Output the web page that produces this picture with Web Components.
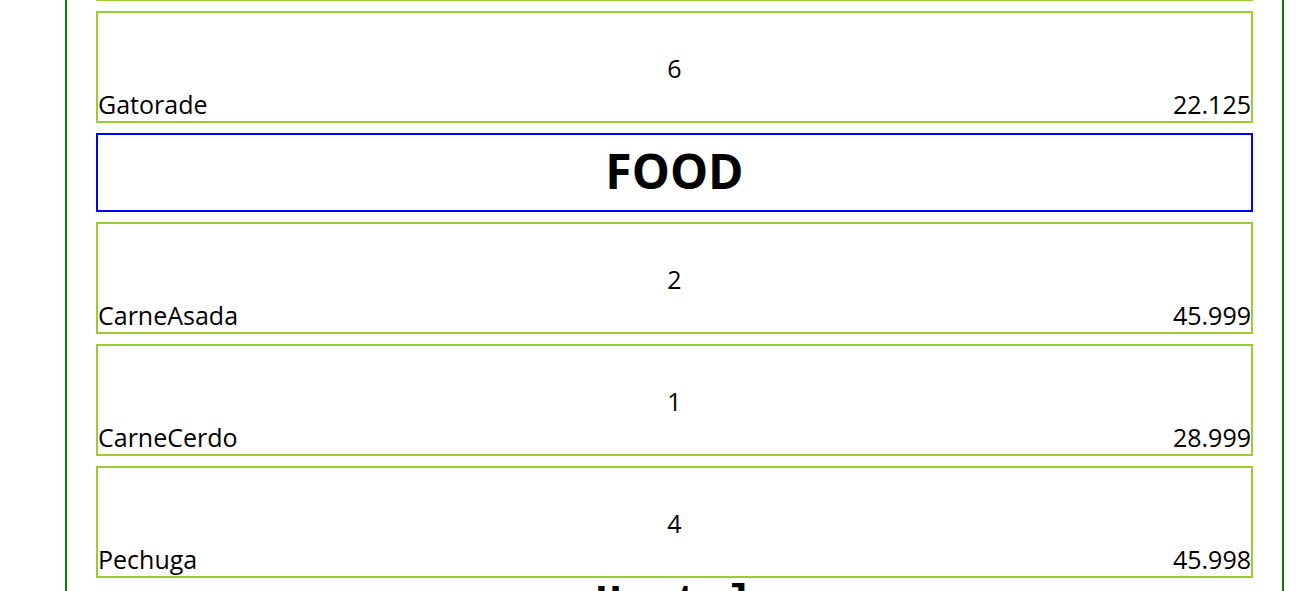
<!DOCTYPE html>
<html lang="es">
<head>
<meta charset="utf-8">
<title>Menu</title>
<style>
html, body { margin: 0; height: 100%; overflow: hidden; }
body { background: #fff; color: #000; font-family: "Open Sans", "Noto Sans", sans-serif; }
</style>
</head>
<body>
<menu-board>
  <menu-edge></menu-edge>
  <menu-item name="Gatorade" quantity="6" price="22.125"></menu-item>
  <menu-heading>FOOD</menu-heading>
  <menu-item name="CarneAsada" quantity="2" price="45.999"></menu-item>
  <menu-item name="CarneCerdo" quantity="1" price="28.999"></menu-item>
  <menu-item name="Pechuga" quantity="4" price="45.998"></menu-item>
  <brand-title slot="footer">Hostal</brand-title>
</menu-board>
<script>
class MenuBoard extends HTMLElement {
  constructor() {
    super();
    this.attachShadow({ mode: "open" }).innerHTML = `
      <style>
        :host { display: block; box-sizing: border-box; min-height: 100vh; margin: 0 32px 0 65px; padding: 0 29px; border: solid green; border-width: 0 2px; }
        main { display: flex; flex-direction: column; gap: 10px; }
      </style>
      <main><slot></slot></main>
      <footer><slot name="footer"></slot></footer>`;
  }
}
class MenuEdge extends HTMLElement {
  constructor() {
    super();
    this.attachShadow({ mode: "open" }).innerHTML = `
      <style>:host { display: block; border-bottom: 1px solid yellowgreen; }</style>`;
  }
}
class MenuHeading extends HTMLElement {
  constructor() {
    super();
    this.attachShadow({ mode: "open" }).innerHTML = `
      <style>
        :host { display: block; border: 2px solid blue; padding-bottom: 4px; }
        h1 { margin: 0; font-size: 48px; line-height: 71px; font-weight: 700; text-align: center; }
      </style>
      <h1><slot></slot></h1>`;
  }
}
class MenuItem extends HTMLElement {
  constructor() {
    super();
    this.attachShadow({ mode: "open" }).innerHTML = `
      <style>
        :host { display: block; border: 2px solid yellowgreen; padding-top: 36px; font-size: 25px; line-height: 38px; }
        p { margin: 0; text-align: center; }
        div { display: flex; justify-content: space-between; line-height: 34px; }
      </style>
      <p></p>
      <div><span class="name"></span><span class="price"></span></div>`;
  }
  connectedCallback() {
    this.shadowRoot.querySelector("p").textContent = this.getAttribute("quantity");
    this.shadowRoot.querySelector(".name").textContent = this.getAttribute("name");
    this.shadowRoot.querySelector(".price").textContent = this.getAttribute("price");
  }
}
class BrandTitle extends HTMLElement {
  constructor() {
    super();
    this.attachShadow({ mode: "open" }).innerHTML = `
      <style>
        :host { display: block; }
        h2 { margin: 0; font: 700 44px/50px "Liberation Mono", monospace; text-align: center; }
      </style>
      <h2><slot></slot></h2>`;
  }
}
customElements.define("menu-board", MenuBoard);
customElements.define("menu-edge", MenuEdge);
customElements.define("menu-heading", MenuHeading);
customElements.define("menu-item", MenuItem);
customElements.define("brand-title", BrandTitle);
</script>
</body>
</html>
